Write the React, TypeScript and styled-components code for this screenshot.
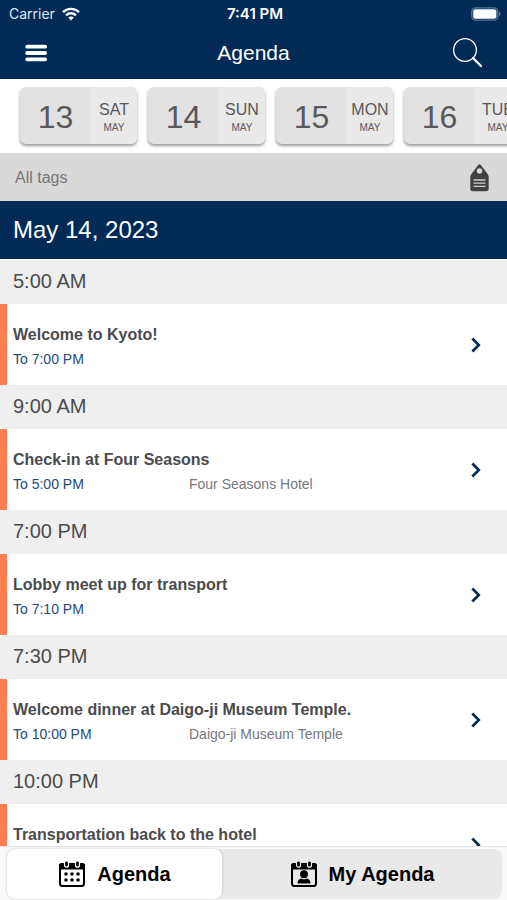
import React, { useState } from "react";
import styled, { createGlobalStyle } from "styled-components";

const navy = "#012a56";
const ink = "#4b4b4d";

const GlobalStyle = createGlobalStyle`
  * { box-sizing: border-box; }
  body { margin: 0; background: #fff; font-family: "Liberation Sans", Arial, sans-serif; }
  h1, h2, h3, p { margin: 0; font-weight: 400; }
  svg { display: block; flex: none; }
`;

const Button = styled.button`
  padding: 0;
  border: 0;
  background: none;
  color: inherit;
  font: inherit;
  cursor: pointer;
`;

const Screen = styled.div`
  display: flex;
  flex-direction: column;
  height: 100vh;
  overflow: hidden;
`;

const StatusBar = styled.div`
  display: grid;
  grid-template-columns: 1fr auto 1fr;
  align-items: center;
  height: 28px;
  flex: none;
  padding: 0 6px 0 9px;
  background: ${navy};
  color: #fff;
  font: 400 14px/28px Inter, sans-serif;
`;

const Carrier = styled.div`
  display: flex;
  align-items: center;
  gap: 7px;
  color: #dfe6ee;
`;

const Clock = styled.time`
  font-size: 15px;
  font-weight: 600;
`;

const Battery = styled.div`
  justify-self: end;
`;

const Header = styled.header`
  display: grid;
  grid-template-columns: 1fr auto 1fr;
  align-items: center;
  height: 51px;
  flex: none;
  padding: 0 24px 2px;
  background: ${navy};
  color: #fff;
`;

const Title = styled.h1`
  font-size: 21px;
  line-height: 24px;
`;

const IconButton = styled(Button)<{ $end?: boolean }>`
  justify-self: ${(p) => (p.$end ? "end" : "start")};
`;

const DayStrip = styled.nav`
  display: flex;
  flex: none;
  gap: 11px;
  height: 74px;
  padding: 8px 0 8px 20px;
  overflow: hidden;
`;

const DayCard = styled(Button)`
  display: flex;
  flex: none;
  width: 117px;
  height: 57px;
  overflow: hidden;
  border-radius: 6px;
  background: #e2e2e2;
  color: #58585a;
  box-shadow: 0 2px 3px rgba(0, 0, 0, 0.4);
`;

const DayNumber = styled.span`
  flex: 1;
  align-self: center;
  padding-top: 2px;
  font-size: 32px;
  line-height: 36px;
  text-align: center;
`;

const DayLabel = styled.span`
  display: flex;
  flex-direction: column;
  align-items: center;
  justify-content: center;
  gap: 4px;
  width: 46px;
  height: 100%;
  padding-top: 4px;
  background: #e9e9e9;
  font-size: 16px;
  line-height: 16px;
`;

const Month = styled.small`
  font-size: 10px;
  line-height: 12px;
`;

const TagFilter = styled(Button)`
  display: flex;
  flex: none;
  align-items: center;
  justify-content: space-between;
  height: 48px;
  padding: 2px 18px 0 15px;
  background: #d9d9d9;
  color: #757575;
  font-size: 16px;
  text-align: left;
`;

const DateHeading = styled.h2`
  flex: none;
  height: 59px;
  padding-left: 13px;
  border-bottom: 1px solid #fff;
  background: ${navy};
  color: #fff;
  font-size: 24px;
  line-height: 58px;
`;

const Schedule = styled.main`
  flex: 1;
  min-height: 0;
  overflow-y: auto;
  scrollbar-width: none;
`;

const TimeHeading = styled.h3`
  height: 44px;
  padding-left: 13px;
  background: #efefef;
  color: ${ink};
  font-size: 20px;
  line-height: 43px;
`;

const SessionRow = styled(Button)`
  display: flex;
  align-items: center;
  justify-content: space-between;
  width: 100%;
  height: 81px;
  padding: 0 26px 0 6px;
  border-left: 7px solid #ff7f50;
  text-align: left;
`;

const SessionText = styled.div`
  padding-top: 3px;
`;

const SessionName = styled.div`
  color: ${ink};
  font-size: 16px;
  font-weight: 700;
  line-height: 20px;
`;

const SessionMeta = styled.div`
  display: grid;
  grid-template-columns: 176px auto;
  min-height: 18px;
  margin-top: 5px;
  color: #77777a;
  font-size: 14px;
  line-height: 18px;
`;

const EndTime = styled.span`
  color: #25497a;
`;

const TabBar = styled.nav`
  flex: none;
  height: 54px;
  padding: 2px 5px 0 7px;
  background: #fafafa;
  border-top: 1px solid #e4e4e4;
`;

const TabGroup = styled.div`
  display: grid;
  grid-template-columns: 215fr 280fr;
  height: 50px;
  border-radius: 8px;
  background: #e9e9e9;
`;

const Tab = styled(Button)<{ $active: boolean }>`
  display: flex;
  align-items: center;
  justify-content: center;
  gap: 11px;
  border-radius: 8px;
  background: ${(p) => (p.$active ? "#fff" : "transparent")};
  box-shadow: ${(p) => (p.$active ? "0 0 3px rgba(0, 0, 0, 0.2)" : "none")};
  color: #000;
  font-size: 20px;
  font-weight: 700;
`;

const WifiIcon = () => (
  <svg width="18" height="14" viewBox="0 0 18 14" fill="none" stroke="#fff" strokeWidth="2.4">
    <path d="M1 5.2C5.5.8 12.5.8 17 5.2" />
    <path d="M4 8.4c2.8-2.8 7.2-2.8 10 0" />
    <path d="M6.2 10.6c1.6-1.5 4-1.5 5.6 0L9 13.5z" fill="#fff" stroke="none" />
  </svg>
);

const BatteryIcon = () => (
  <svg width="30" height="14" viewBox="0 0 30 14">
    <rect x=".8" y=".8" width="26" height="12.4" rx="4" fill="none" stroke="#5b7896" strokeWidth="1.3" />
    <rect x="2.2" y="2.2" width="23.2" height="9.6" rx="2.4" fill="#fff" />
    <path d="M28 4.8c2 .7 2 3.7 0 4.4z" fill="#5b7896" />
  </svg>
);

const MenuIcon = () => (
  <svg width="24" height="18" viewBox="0 0 24 18" stroke="#fff" strokeWidth="3.8" strokeLinecap="round">
    <path d="M3.2 2.7h18M3.2 9h18M3.2 15.300h18" />
  </svg>
);

const SearchIcon = () => (
  <svg width="31" height="31" viewBox="0 0 31 31" fill="none" stroke="#fff">
    <circle cx="13" cy="13" r="11.4" strokeWidth="1.3" />
    <path d="M21 21l8 8" strokeWidth="2.3" strokeLinecap="round" />
  </svg>
);

const TagIcon = () => (
  <svg width="19" height="28" viewBox="0 0 19 28">
    <path
      fillRule="evenodd"
      fill="#414143"
      d="M8.2.9Q9.5-.3 10.8.9L17.6 10q1.1 1.5 1.1 3v11.5q0 2.700-2.700 2.700H3Q.3 27.200.3 24.500V13q0-1.500 1.100-3zM9.500 4.300a2.700 2.700 0 1 0 0 5.400 2.700 2.700 0 0 0 0-5.400z"
    />
    <path d="M3.500 16h12M3.500 19.200h12M3.500 22.400h12" stroke="#cfcfcf" strokeWidth="1.300" />
  </svg>
);

const ChevronIcon = () => (
  <svg width="10" height="16" viewBox="0 0 10 16" fill="none" stroke={navy} strokeWidth="2.6">
    <path d="M1.300 1.500L7.800 8l-6.500 6.500" />
  </svg>
);

const CalendarFrame = ({ tray, children }: { tray: string; children: React.ReactNode }) => (
  <svg width="28" height="28" viewBox="0 0 28 28">
    <rect x="2" y="4" width="24" height="22" rx="2.500" fill="none" stroke="#000" strokeWidth="2" />
    <path d="M1 9.500V5.500Q1 3 3.500 3h21Q27 3 27 5.500v4z" />
    <rect x="6.500" y=".8" width="4" height="6.400" rx="2" stroke={tray} strokeWidth="1.200" />
    <rect x="17.500" y=".8" width="4" height="6.400" rx="2" stroke={tray} strokeWidth="1.200" />
    {children}
  </svg>
);

const AgendaIcon = () => (
  <CalendarFrame tray="#fff">
    {[14, 20].map((y) =>
      [8, 14, 20].map((x) => <circle key={`${x}-${y}`} cx={x} cy={y} r="1.800" />)
    )}
  </CalendarFrame>
);

const MyAgendaIcon = () => (
  <CalendarFrame tray="#e9e9e9">
    <circle cx="14" cy="14.200" r="3.900" />
    <path d="M7.500 23.500q0-4.300 4-5l2.500 1 2.500-1q4 .7 4 5z" />
  </CalendarFrame>
);

const days = [
  { number: 13, weekday: "SAT" },
  { number: 14, weekday: "SUN" },
  { number: 15, weekday: "MON" },
  { number: 16, weekday: "TUE" },
];

const sessions = [
  { start: "5:00 AM", name: "Welcome to Kyoto!", end: "7:00 PM" },
  { start: "9:00 AM", name: "Check-in at Four Seasons", end: "5:00 PM", place: "Four Seasons Hotel" },
  { start: "7:00 PM", name: "Lobby meet up for transport", end: "7:10 PM" },
  { start: "7:30 PM", name: "Welcome dinner at Daigo-ji Museum Temple.", end: "10:00 PM", place: "Daigo-ji Museum Temple" },
  { start: "10:00 PM", name: "Transportation back to the hotel" },
];

const tabs = [
  { label: "Agenda", Icon: AgendaIcon },
  { label: "My Agenda", Icon: MyAgendaIcon },
];

export default function App() {
  const [activeTab, setActiveTab] = useState("Agenda");

  return (
    <>
      <GlobalStyle />
      <Screen>
        <StatusBar>
          <Carrier>
            Carrier
            <WifiIcon />
          </Carrier>
          <Clock>7:41 PM</Clock>
          <Battery>
            <BatteryIcon />
          </Battery>
        </StatusBar>
        <Header>
          <IconButton aria-label="Menu">
            <MenuIcon />
          </IconButton>
          <Title>Agenda</Title>
          <IconButton $end aria-label="Search">
            <SearchIcon />
          </IconButton>
        </Header>
        <DayStrip aria-label="Days">
          {days.map((day) => (
            <DayCard key={day.number}>
              <DayNumber>{day.number}</DayNumber>
              <DayLabel>
                {day.weekday}
                <Month>MAY</Month>
              </DayLabel>
            </DayCard>
          ))}
        </DayStrip>
        <TagFilter>
          All tags
          <TagIcon />
        </TagFilter>
        <DateHeading>May 14, 2023</DateHeading>
        <Schedule>
          {sessions.map((session) => (
            <section key={session.start}>
              <TimeHeading>{session.start}</TimeHeading>
              <SessionRow>
                <SessionText>
                  <SessionName>{session.name}</SessionName>
                  <SessionMeta>
                    {session.end && <EndTime>To {session.end}</EndTime>}
                    {session.place && <span>{session.place}</span>}
                  </SessionMeta>
                </SessionText>
                <ChevronIcon />
              </SessionRow>
            </section>
          ))}
        </Schedule>
        <TabBar aria-label="Views">
          <TabGroup>
            {tabs.map(({ label, Icon }) => (
              <Tab
                key={label}
                $active={label === activeTab}
                aria-pressed={label === activeTab}
                onClick={() => setActiveTab(label)}
              >
                <Icon />
                {label}
              </Tab>
            ))}
          </TabGroup>
        </TabBar>
      </Screen>
    </>
  );
}
